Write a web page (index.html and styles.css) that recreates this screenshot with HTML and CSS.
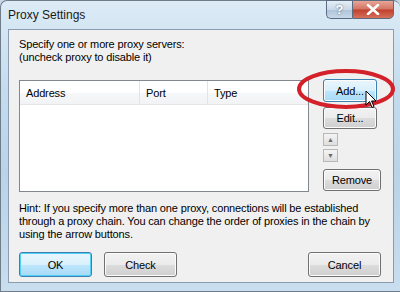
FILE: index.html
```html
<!DOCTYPE html>
<html lang="en">
<head>
    <meta charset="UTF-8">
    <title>Proxy Settings</title>
    <link rel="stylesheet" href="styles.css">
</head>
<body>
    <div class="window">
        <div class="titlebar">
            <span class="title">Proxy Settings</span>
            <div class="caption-btns">
                <span class="cap-help">?</span>
                <span class="cap-close">
                    <svg width="14" height="11" viewBox="0 0 14 11"><path d="M2 1 L12 10 M12 1 L2 10" stroke="#fff" stroke-width="2.6" stroke-linecap="round"/></svg>
                </span>
            </div>
        </div>
        <div class="client">
            <p class="intro">Specify one or more proxy servers:<br>(uncheck proxy to disable it)</p>

            <div class="middle">
                <div class="listbox">
                    <div class="list-head">
                        <span class="col col-address">Address</span>
                        <span class="col col-port">Port</span>
                        <span class="col col-type">Type</span>
                    </div>
                </div>
                <div class="side">
                    <div class="add-wrap">
                        <button class="btn btn-hover btn-add">Add...</button>
                        <svg class="ring" width="100" height="42" viewBox="0 0 100 42"><ellipse cx="50" cy="21" rx="47" ry="18" fill="none" stroke="#d42028" stroke-width="4"/></svg>
                        <svg class="cursor" width="12" height="19" viewBox="0 0 12 19"><path d="M1 1 L1 15 L4.5 11.5 L7 17.5 L9 16.5 L6.5 11 L11 11 Z" fill="#fff" stroke="#000" stroke-width="1"/></svg>
                    </div>
                    <button class="btn btn-edit">Edit...</button>
                    <div class="arrows">
                        <span class="arrow-btn">&#9650;</span>
                        <span class="arrow-btn">&#9660;</span>
                    </div>
                    <button class="btn btn-remove">Remove</button>
                </div>
            </div>

            <p class="hint">Hint: If you specify more than one proxy, connections will be established through a proxy chain. You can change the order of proxies in the chain by using the arrow buttons.</p>

            <div class="footer">
                <button class="btn btn-default btn-wide">OK</button>
                <button class="btn btn-wide">Check</button>
                <span class="spacer"></span>
                <button class="btn btn-wide">Cancel</button>
            </div>
        </div>
    </div>
</body>
</html>
```

FILE: styles.css
```css
body {
    margin: 0;
    width: 400px;
    height: 292px;
    overflow: hidden;
    font-family: "Liberation Sans", Arial, sans-serif;
    font-size: 11px;
    letter-spacing: -0.15px;
    color: #000;
    background: #c9dbe9;
}
.window {
    height: 292px;
    box-sizing: border-box;
    display: flex;
    flex-direction: column;
    padding: 0 6px 8px 7px;
    border: 1px solid #6f7c8a;
    border-right: none;
    border-radius: 7px 7px 0 0;
    background: linear-gradient(180deg, #dcebf6 0%, #c5dcee 30%, #b9d3e8 60%, #c9deee 100%);
}
.titlebar {
    height: 28px;
    display: flex;
    justify-content: space-between;
    align-items: flex-start;
}
.title {
    margin-top: 7px;
    font-size: 12px;
    letter-spacing: 0;
    color: #1a1a1a;
}
.caption-btns {
    display: flex;
    margin-top: -1px;
}
.cap-help,
.cap-close {
    height: 19px;
    display: flex;
    align-items: center;
    justify-content: center;
    border: 1px solid #5b6c80;
    box-sizing: border-box;
}
.cap-help {
    width: 26px;
    border-right: none;
    border-radius: 0 0 0 5px;
    background: linear-gradient(180deg, #e4eef7 0%, #c9d9e8 50%, #aec3d8 51%, #c7d8e8 100%);
    color: #fff;
    font-weight: bold;
    font-size: 13px;
    text-shadow: 0 0 2px #456;
}
.cap-close {
    width: 42px;
    border-radius: 0 0 5px 0;
    background: linear-gradient(180deg, #e8a597 0%, #d47463 48%, #c0402c 52%, #d6705a 100%);
}
.client {
    flex: 1;
    background: #f0f0f0;
    border: 1px solid #8b9cb0;
    padding: 8px 12px 5px 10px;
    display: flex;
    flex-direction: column;
}
.intro {
    margin: 0;
    line-height: 13px;
}
.middle {
    display: flex;
    margin-top: 16px;
}
.listbox {
    width: 290px;
    height: 112px;
    box-sizing: border-box;
    border: 1px solid #828790;
    background: #fff;
}
.list-head {
    display: flex;
    height: 23px;
    border-bottom: 1px solid #e5e5e5;
    background: linear-gradient(180deg, #ffffff 0%, #ffffff 50%, #f6f7f8 51%, #f2f3f4 100%);
}
.col {
    box-sizing: border-box;
    padding: 6px 0 0 6px;
    border-right: 1px solid #e3e4e6;
}
.col-address { width: 120px; }
.col-port { width: 68px; }
.col-type { width: 99px; border-right: none; }
.side {
    display: flex;
    flex-direction: column;
    align-items: flex-start;
    margin-left: 14px;
    margin-top: -1px;
}
.btn {
    font-family: "Liberation Sans", Arial, sans-serif;
    font-size: 11px;
    letter-spacing: -0.15px;
    color: #000;
    height: 23px;
    padding: 0 4px;
    border: 1px solid #707070;
    border-radius: 3px;
    background: linear-gradient(180deg, #f2f2f2 0%, #ebebeb 50%, #dddddd 51%, #cfcfcf 100%);
    box-shadow: inset 0 0 0 1px #fcfcfc;
}
.btn-hover,
.btn-default {
    border-color: #3c7fb1;
    background: linear-gradient(180deg, #eaf6fd 0%, #d9f0fc 50%, #bee6fd 51%, #a7d9f5 100%);
}
.btn-default {
    box-shadow: inset 0 0 0 1px #4fd1f6;
}
.add-wrap {
    position: relative;
}
.btn-add {
    width: 54px;
}
.ring {
    position: absolute;
    left: -27px;
    top: -11px;
}
.cursor {
    position: absolute;
    left: 42px;
    top: 11px;
}
.btn-edit {
    width: 54px;
    height: 22px;
    margin-top: 5px;
}
.arrows {
    display: flex;
    flex-direction: column;
    gap: 3px;
    margin-top: 4px;
}
.arrow-btn {
    width: 15px;
    height: 13px;
    box-sizing: border-box;
    border: 1px solid #b8b8b8;
    background: linear-gradient(180deg, #f4f4f4, #dedede);
    color: #6a6a6a;
    font-size: 7px;
    line-height: 11px;
    text-align: center;
}
.btn-remove {
    width: 58px;
    height: 22px;
    margin-top: 7px;
}
.hint {
    margin: 10px 0 0 0;
    line-height: 13px;
}
.footer {
    display: flex;
    margin-top: auto;
    gap: 12px;
}
.btn-wide {
    width: 73px;
    height: 25px;
}
.spacer {
    flex: 1;
}
```
